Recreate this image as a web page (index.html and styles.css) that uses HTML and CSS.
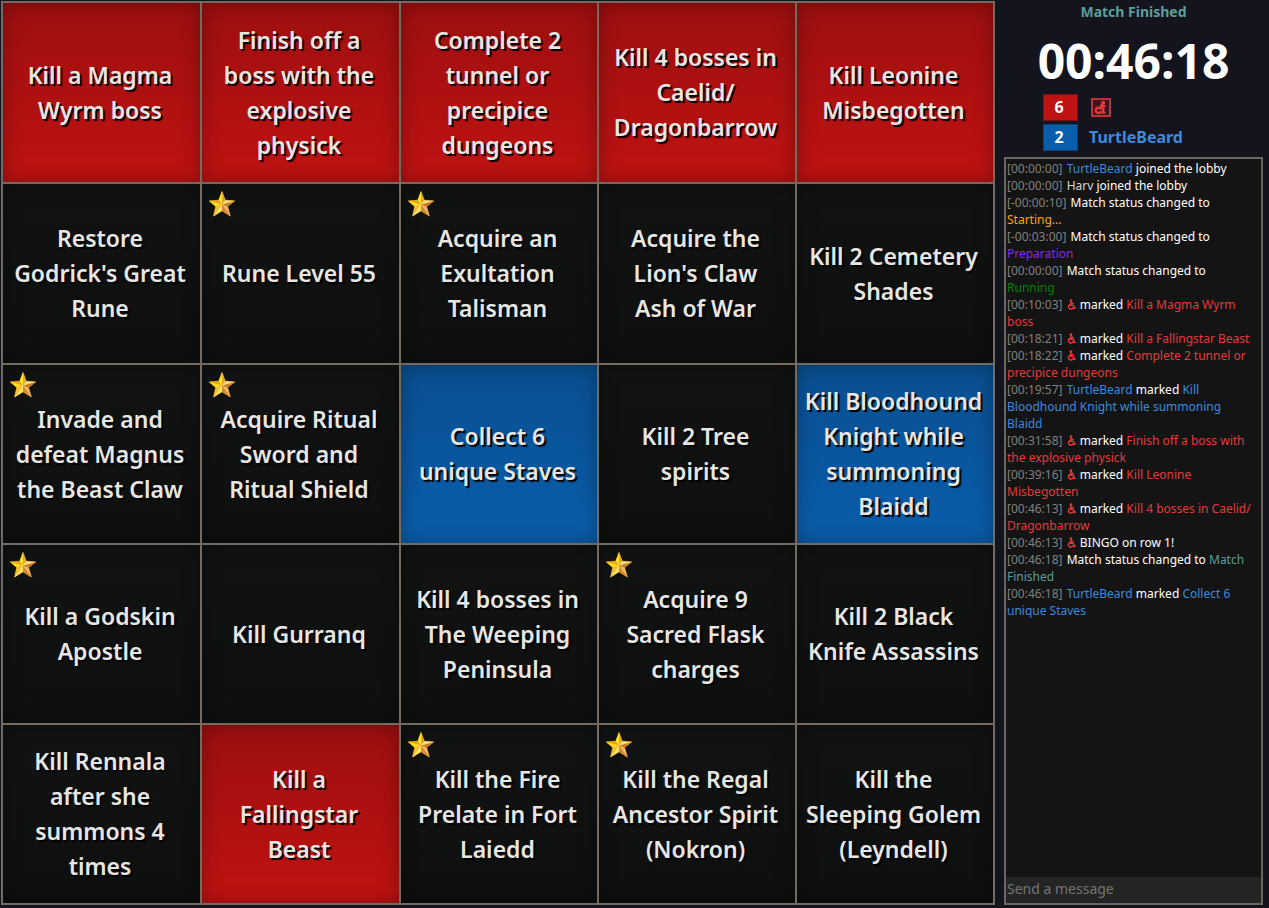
FILE: index.html
```
<!DOCTYPE html>
<html lang="en">
<head>
<meta charset="utf-8">
<title>Bingo</title>
<link rel="stylesheet" href="styles.css">
</head>
<body>
<svg class="defs" aria-hidden="true">
  <defs>
    <linearGradient id="gold" x1="0" y1="0" x2="1" y2="1">
      <stop offset="0" stop-color="#fff04a"/><stop offset="0.5" stop-color="#f8c425"/><stop offset="1" stop-color="#a95c15"/>
    </linearGradient>
    <symbol id="star" viewBox="0 0 26 26">
      <path d="M13 .5 16.2 9.2 25.7 9.9 18.5 15.5 21.3 25 13 19.8 4.6 25 6.8 15.5.3 9.9 9.8 9.2Z" fill="url(#gold)" stroke="#e0a21c" stroke-width=".8" stroke-linejoin="round"/>
      <path d="M13 .5 16.2 9.2 13 13.5Z" fill="#e3aa1c"/>
      <path d="M13 .5 9.8 9.2 13 13.5Z" fill="#ffe52e"/>
      <path d="M.3 9.9 9.8 9.2 13 13.5Z" fill="#e8a51b"/>
      <path d="M.3 9.9 6.8 15.5 13 13.5Z" fill="#ffdc20"/>
      <path d="M4.6 25 6.8 15.5 13 13.5Z" fill="#f4bd37"/>
      <path d="M4.6 25 13 19.8V13.5Z" fill="#ffe36a"/>
      <path d="M21.3 25 13 19.8V13.5Z" fill="#cf8a35"/>
      <path d="M21.3 25 18.5 15.5 13 13.5Z" fill="#f5b56c"/>
      <path d="M25.7 9.9 18.5 15.5 13 13.5Z" fill="#c47a2a"/>
      <path d="M25.7 9.9 16.2 9.2 13 13.5Z" fill="#ffd98a"/>
    </symbol>
    <symbol id="chair" viewBox="0 0 10 12">
      <circle cx="4.4" cy="1.6" r="1.5" fill="currentColor"/>
      <path d="M4.2 2.5V7H7.2L8 10.4 9.8 9.8M4.2 4.8H7.6M3.4 5.8A2.7 2.7 0 1 0 6.8 9.4" fill="none" stroke="currentColor" stroke-width="1.6"/>
    </symbol>
    <symbol id="chair-box" viewBox="0 0 20 19">
      <rect x="1" y="1" width="18" height="17" fill="#3a1520" stroke="currentColor" stroke-width="1.6"/>
      <circle cx="12.3" cy="4.7" r="1.9" fill="currentColor"/>
      <path d="M11.2 5.5 8.8 10.4H12.4L11.8 14.6H14.5M10.5 7.8H14.5M7.6 9.4A2.8 2.8 0 1 0 10.2 13.2" fill="none" stroke="currentColor" stroke-width="2.2"/>
    </symbol>
  </defs>
</svg>
<div class="app">
  <main class="board">
    <button class="cell red">Kill a Magma<br>Wyrm boss</button>
    <button class="cell red">Finish off a<br>boss with the<br>explosive<br>physick</button>
    <button class="cell red">Complete 2<br>tunnel or<br>precipice<br>dungeons</button>
    <button class="cell red">Kill 4 bosses in<br>Caelid/<br>Dragonbarrow</button>
    <button class="cell red">Kill Leonine<br>Misbegotten</button>

    <button class="cell">Restore<br>Godrick's Great<br>Rune</button>
    <button class="cell"><svg class="star"><use href="#star"/></svg>Rune Level 55</button>
    <button class="cell"><svg class="star"><use href="#star"/></svg>Acquire an<br>Exultation<br>Talisman</button>
    <button class="cell">Acquire the<br>Lion's Claw<br>Ash of War</button>
    <button class="cell">Kill 2 Cemetery<br>Shades</button>

    <button class="cell"><svg class="star"><use href="#star"/></svg>Invade and<br>defeat Magnus<br>the Beast Claw</button>
    <button class="cell"><svg class="star"><use href="#star"/></svg>Acquire Ritual<br>Sword and<br>Ritual Shield</button>
    <button class="cell blue">Collect 6<br>unique Staves</button>
    <button class="cell">Kill 2 Tree<br>spirits</button>
    <button class="cell blue">Kill Bloodhound<br>Knight while<br>summoning<br>Blaidd</button>

    <button class="cell"><svg class="star"><use href="#star"/></svg>Kill a Godskin<br>Apostle</button>
    <button class="cell">Kill Gurranq</button>
    <button class="cell">Kill 4 bosses in<br>The Weeping<br>Peninsula</button>
    <button class="cell"><svg class="star"><use href="#star"/></svg>Acquire 9<br>Sacred Flask<br>charges</button>
    <button class="cell">Kill 2 Black<br>Knife Assassins</button>

    <button class="cell">Kill Rennala<br>after she<br>summons 4<br>times</button>
    <button class="cell red">Kill a<br>Fallingstar<br>Beast</button>
    <button class="cell"><svg class="star"><use href="#star"/></svg>Kill the Fire<br>Prelate in Fort<br>Laiedd</button>
    <button class="cell"><svg class="star"><use href="#star"/></svg>Kill the Regal<br>Ancestor Spirit<br>(Nokron)</button>
    <button class="cell">Kill the<br>Sleeping Golem<br>(Leyndell)</button>
  </main>
  <aside class="side">
    <div class="status">Match Finished</div>
    <div class="timer">00:46:18</div>
    <div class="scores">
      <div class="team"><span class="score red-score">6</span><svg class="chair-box c-red"><use href="#chair-box"/></svg></div>
      <div class="team"><span class="score blue-score">2</span><span class="name c-blue">TurtleBeard</span></div>
    </div>
    <section class="chat">
      <div class="log">
        <p><time>[00:00:00]</time> <span class="c-blue">TurtleBeard</span> joined the lobby</p>
        <p><time>[00:00:00]</time> <span class="c-grey">Harv</span> joined the lobby</p>
        <p><time>[-00:00:10]</time> Match status changed to<br><span class="c-orange">Starting...</span></p>
        <p><time>[-00:03:00]</time> Match status changed to<br><span class="c-purple">Preparation</span></p>
        <p><time>[00:00:00]</time> Match status changed to<br><span class="c-green">Running</span></p>
        <p><time>[00:10:03]</time> <svg class="chair c-red"><use href="#chair"/></svg> marked <span class="c-red">Kill a Magma Wyrm<br>boss</span></p>
        <p><time>[00:18:21]</time> <svg class="chair c-red"><use href="#chair"/></svg> marked <span class="c-red">Kill a Fallingstar Beast</span></p>
        <p><time>[00:18:22]</time> <svg class="chair c-red"><use href="#chair"/></svg> marked <span class="c-red">Complete 2 tunnel or<br>precipice dungeons</span></p>
        <p><time>[00:19:57]</time> <span class="c-blue">TurtleBeard</span> marked <span class="c-blue">Kill<br>Bloodhound Knight while summoning<br>Blaidd</span></p>
        <p><time>[00:31:58]</time> <svg class="chair c-red"><use href="#chair"/></svg> marked <span class="c-red">Finish off a boss with<br>the explosive physick</span></p>
        <p><time>[00:39:16]</time> <svg class="chair c-red"><use href="#chair"/></svg> marked <span class="c-red">Kill Leonine<br>Misbegotten</span></p>
        <p><time>[00:46:13]</time> <svg class="chair c-red"><use href="#chair"/></svg> marked <span class="c-red">Kill 4 bosses in Caelid/<br>Dragonbarrow</span></p>
        <p><time>[00:46:13]</time> <svg class="chair c-red"><use href="#chair"/></svg> BINGO on row 1!</p>
        <p><time>[00:46:18]</time> Match status changed to <span class="c-teal">Match<br>Finished</span></p>
        <p><time>[00:46:18]</time> <span class="c-blue">TurtleBeard</span> marked <span class="c-blue">Collect 6<br>unique Staves</span></p>
      </div>
      <input class="message" type="text" placeholder="Send a message" aria-label="Send a message">
    </section>
  </aside>
</div>
</body>
</html>
```
FILE: styles.css
```
* { box-sizing: border-box; }
body {
  margin: 0;
  background: #14141f;
  color: #fff;
  font-family: "Segoe UI", "Noto Sans", sans-serif;
}
.defs { position: absolute; width: 0; height: 0; }
.app {
  display: flex;
  gap: 9px;
  height: 100vh;
  padding: 1px 6px 3px 1px;
}
.board {
  flex: 1;
  display: grid;
  grid-template-columns: 197fr 197fr 196fr 196fr 196fr;
  grid-template-rows: 179fr 179fr 178fr 178fr 178fr;
  gap: 2px;
  padding: 2px;
  background: #746b60;
}
.cell {
  position: relative;
  min-width: 0;
  border: 0;
  padding: 0 3px 0 0;
  background: linear-gradient(#101312, #0e100f);
  box-shadow: inset 0 0 20px rgba(0, 0, 0, 0.3);
  color: #e8e6e3;
  font: 600 23px/35px "Comic Sans MS", "Noto Sans", sans-serif;
  text-align: center;
  white-space: nowrap;
  text-shadow: 2px 2px 1px #000;
}
.red { background: linear-gradient(#9d0f0f, #bf1212); }
.blue { background: linear-gradient(#094f90, #0a5dab); }
.star {
  position: absolute;
  left: 7px;
  top: 7px;
  width: 26px;
  height: 26px;
}
.side {
  width: 259px;
  display: flex;
  flex-direction: column;
}
.status {
  height: 22px;
  color: #5b9e9b;
  font-size: 14px;
  font-weight: 700;
  line-height: 22px;
  text-align: center;
}
.timer {
  margin-top: 7px;
  font-size: 48px;
  font-weight: 700;
  line-height: 61px;
  text-align: center;
}
.scores {
  display: flex;
  flex-direction: column;
  gap: 3px;
  padding: 3px 0 6px 39px;
}
.team { display: flex; align-items: center; gap: 11px; }
.score {
  width: 35px;
  height: 27px;
  border: 1px solid;
  padding-right: 3px;
  font: 700 16px/25px "Comic Sans MS", "Noto Sans", sans-serif;
  text-align: center;
}
.red-score { background: #bf1212; border-color: #7d1015; }
.blue-score { background: #0a5dab; border-color: #0c437a; }
.chair-box { width: 20px; height: 19px; margin-left: 2px; }
.name { font: 700 16px/27px "Comic Sans MS", "Noto Sans", sans-serif; }
.chat {
  flex: 1;
  display: flex;
  flex-direction: column;
  border: 2px solid #69655f;
  background: #141414;
}
.log {
  flex: 1;
  padding: 1px;
  font-size: 12px;
  line-height: 17px;
  white-space: nowrap;
}
.log p { margin: 0; }
time { color: #808080; margin-right: 1px; }
.chair { width: 9px; height: 11px; margin-right: 1px; vertical-align: -1px; }
.message {
  width: 100%;
  height: 26px;
  border: 0;
  padding: 0 1px 3px;
  background: #242424;
  color: #fff;
  font: 14px "Segoe UI", "Noto Sans", sans-serif;
}
.message::placeholder { color: #757575; opacity: 1; }
.c-red { color: #e23b3b; }
.c-blue { color: #3b8ade; }
.c-grey { color: #d8d8d8; }
.c-orange { color: #ffa500; }
.c-purple { color: #8a2be2; }
.c-green { color: #008000; }
.c-teal { color: #5b9e9b; }
```
